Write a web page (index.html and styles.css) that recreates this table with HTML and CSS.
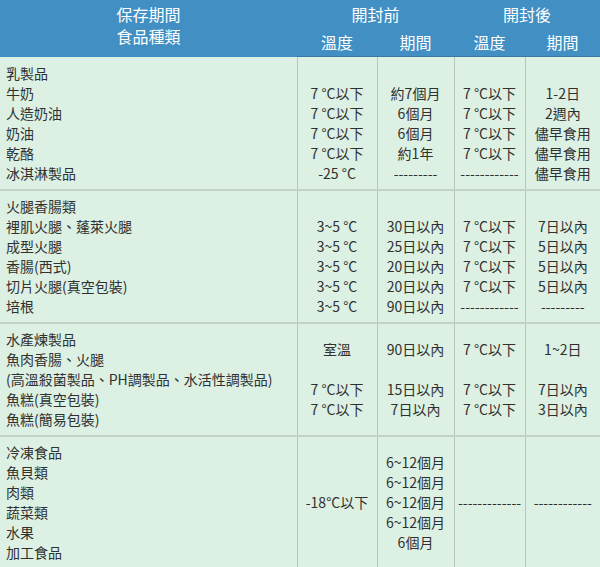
FILE: index.html
```html
<!DOCTYPE html>
<html lang="zh-Hant">
<head>
<meta charset="utf-8">
<title>保存期間</title>
<link rel="stylesheet" href="styles.css">
</head>
<body>
<table class="storage">
  <colgroup>
    <col class="c-food">
    <col class="c-t1">
    <col class="c-p1">
    <col class="c-t2">
    <col class="c-p2">
  </colgroup>
  <thead>
    <tr class="head-top">
      <th rowspan="2" class="head-title">保存期間<br>食品種類</th>
      <th colspan="2">開封前</th>
      <th colspan="2">開封後</th>
    </tr>
    <tr class="head-sub">
      <th>溫度</th>
      <th>期間</th>
      <th>溫度</th>
      <th>期間</th>
    </tr>
  </thead>
  <tbody>
    <tr class="grp g-bottom first">
      <td class="food">乳製品<br>牛奶<br>人造奶油<br>奶油<br>乾酪<br>冰淇淋製品</td>
      <td>7 °C以下<br>7 °C以下<br>7 °C以下<br>7 °C以下<br>-25 °C</td>
      <td>約7個月<br>6個月<br>6個月<br>約1年<br>---------</td>
      <td>7 °C以下<br>7 °C以下<br>7 °C以下<br>7 °C以下<br>------------</td>
      <td>1-2日<br>2週內<br>儘早食用<br>儘早食用<br>儘早食用</td>
    </tr>
    <tr class="grp g-bottom">
      <td class="food">火腿香腸類<br>裡肌火腿、蓬萊火腿<br>成型火腿<br>香腸(西式)<br>切片火腿(真空包裝)<br>培根</td>
      <td>3~5 °C<br>3~5 °C<br>3~5 °C<br>3~5 °C<br>3~5 °C</td>
      <td>30日以內<br>25日以內<br>20日以內<br>20日以內<br>90日以內</td>
      <td>7 °C以下<br>7 °C以下<br>7 °C以下<br>7 °C以下<br>------------</td>
      <td>7日以內<br>5日以內<br>5日以內<br>5日以內<br>---------</td>
    </tr>
    <tr class="grp g-middle">
      <td class="food">水產煉製品<br>魚肉香腸、火腿<br>(高溫殺菌製品、PH調製品、水活性調製品)<br>魚糕(真空包裝)<br>魚糕(簡易包裝)</td>
      <td>室溫<br><br>7 °C以下<br>7 °C以下</td>
      <td>90日以內<br><br>15日以內<br>7日以內</td>
      <td>7 °C以下<br><br>7 °C以下<br>7 °C以下</td>
      <td>1~2日<br><br>7日以內<br>3日以內</td>
    </tr>
    <tr class="grp g-middle last">
      <td class="food">冷凍食品<br>魚貝類<br>肉類<br>蔬菜類<br>水果<br>加工食品</td>
      <td>-18°C以下</td>
      <td>6~12個月<br>6~12個月<br>6~12個月<br>6~12個月<br>6個月</td>
      <td>-------------</td>
      <td>------------</td>
    </tr>
  </tbody>
</table>
</body>
</html>
```

FILE: styles.css
```css
html, body {
  margin: 0;
  padding: 0;
  background: #dcf0e3;
}

.storage {
  width: 600px;
  border-collapse: collapse;
  table-layout: fixed;
  font-family: "Noto Sans CJK TC", "Noto Sans", sans-serif;
  font-size: 14px;
  color: #303030;
}

.c-food { width: 297px; }
.c-t1 { width: 80px; }
.c-p1 { width: 77px; }
.c-t2 { width: 71px; }
.c-p2 { width: 75px; }

.storage thead th {
  background: #418fc3;
  color: #ffffff;
  font-weight: normal;
  font-size: 16px;
  text-align: center;
  padding: 0;
}

.head-top th {
  height: 29px;
  line-height: 29px;
}

.head-top .head-title {
  line-height: 22px;
  padding-top: 3px;
  vertical-align: top;
}

.head-sub th {
  height: 27px;
  line-height: 27px;
  border-bottom: 1px solid #3479a8;
}

.grp td {
  line-height: 20px;
  padding: 5px 2px 6px;
  text-align: center;
  white-space: nowrap;
  border-left: 1px solid #b4c7ba;
  border-bottom: 2px solid #c2d4c8;
}

.grp.first td { padding-top: 6px; }

.grp td.food {
  text-align: left;
  padding-left: 6px;
  vertical-align: top;
  border-left: none;
}

.g-bottom td { vertical-align: bottom; }
.g-middle td { vertical-align: middle; }

.grp.last td { border-bottom: none; }
```
